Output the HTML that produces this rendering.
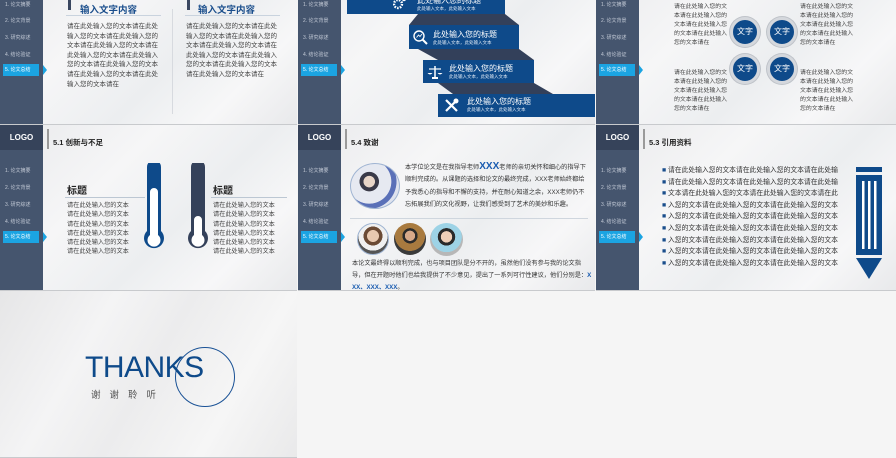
<!DOCTYPE html>
<html><head><meta charset="utf-8">
<style>
*{margin:0;padding:0;box-sizing:border-box}
body{width:896px;height:458px;background:#f5f5f5;position:relative;overflow:hidden;font-family:"Liberation Sans","Noto Sans CJK SC",sans-serif}
.s{position:absolute;overflow:hidden;background:linear-gradient(135deg,#e9eaec 0%,#f6f6f7 35%,#eceef0 60%,#f7f7f8 80%,#e8e9eb 100%);border-bottom:1px solid #c8cacd}
.side{position:absolute;left:0;top:0;width:43px;height:166px;background:#45556e}
.logo{position:absolute;left:0;top:0;width:43px;height:25px;background:#36435a;color:#fff;font-weight:bold;font-size:8px;text-align:center;line-height:25px}
.it{position:absolute;left:0;width:43px;height:12px;font-size:5px;color:#c3cad6;line-height:12px;padding-left:5px;white-space:nowrap}
.act{left:3px;width:36px;background:#1ba4e2;color:#fff;padding-left:2px}
.arr{position:absolute;left:43px;width:0;height:0;border-top:5px solid transparent;border-bottom:5px solid transparent;border-left:4px solid #1ba4e2}
.ab{position:absolute}
.ttl{position:absolute;left:47px;top:4px;width:2px;height:20px;background:#9a9a9a}
.tt{position:absolute;left:53px;top:12px;font-size:7.5px;font-weight:bold;color:#222}
.p{position:absolute;color:#444;word-break:break-all}
.bn{position:absolute;background:#0e4a8a;color:#fff}
.bn b{position:absolute;font-size:8px;font-weight:normal;white-space:nowrap}
.bn i{position:absolute;font-style:normal;font-size:4.5px;white-space:nowrap;color:#dbe6f2}
.c{position:absolute;width:30px;height:30px;border-radius:50%;background:#0e4a8a;border:3px solid #d5d8dd;box-shadow:0 0 0 1px #bfc3c9;color:#fff;font-size:8px;text-align:center;line-height:24px}
</style></head><body>

<div class="s" style="left:0;top:-41px;width:297px;height:166px">
 <div class="side"></div><div class="logo">LOGO</div>
 <div class="it" style="top:40px">1. 论文摘要</div><div class="it" style="top:56px">2. 论文背景</div><div class="it" style="top:73px">3. 研究综述</div><div class="it" style="top:90px">4. 结论验证</div><div class="it act" style="top:105px">5. 论文总结</div><div class="arr" style="top:106px"></div>
 <div class="ab" style="left:68px;top:38px;width:10px;height:13px;border-left:3px solid #3a4760;border-top:3px solid #3a4760"></div>
 <div class="ab" style="left:80px;top:43px;font-size:9.5px;font-weight:bold;color:#1a4e8c">输入文字内容</div>
 <div class="ab" style="left:66px;top:56px;width:95px;height:1px;background:#c9d3de"></div>
 <div class="ab" style="left:187px;top:38px;width:10px;height:13px;border-left:3px solid #3a4760;border-top:3px solid #3a4760"></div>
 <div class="ab" style="left:198px;top:43px;font-size:9.5px;font-weight:bold;color:#1a4e8c">输入文字内容</div>
 <div class="ab" style="left:185px;top:56px;width:95px;height:1px;background:#c9d3de"></div>
 <div class="ab" style="left:172px;top:50px;width:1px;height:105px;background:#d7dadf"></div>
 <div class="p" style="left:67px;top:63px;width:92px;font-size:6.5px;line-height:9.6px">请在此处输入您的文本请在此处输入您的文本请在此处输入您的文本请在此处输入您的文本请在此处输入您的文本请在此处输入您的文本请在此处输入您的文本请在此处输入您的文本请在此处输入您的文本请在</div>
 <div class="p" style="left:186px;top:63px;width:92px;font-size:6.5px;line-height:9.6px">请在此处输入您的文本请在此处输入您的文本请在此处输入您的文本请在此处输入您的文本请在此处输入您的文本请在此处输入您的文本请在此处输入您的文本请在此处输入您的文本请在</div>
</div>

<div class="s" style="left:298px;top:-41px;width:297px;height:166px">
 <div class="side"></div><div class="logo">LOGO</div>
 <div class="it" style="top:40px">1. 论文摘要</div><div class="it" style="top:56px">2. 论文背景</div><div class="it" style="top:73px">3. 研究综述</div><div class="it" style="top:90px">4. 结论验证</div><div class="it act" style="top:105px">5. 论文总结</div><div class="arr" style="top:106px"></div>
 <svg class="ab" style="left:0;top:0" width="297" height="166"><g fill="#33405a">
  <polygon points="120,55 207,55 221,66 111,66"/>
  <polygon points="120,90 221,90 236,101 140,101"/>
  <polygon points="140,124 236,124 255,135 155,135"/></g></svg>
 <div class="bn" style="left:49px;top:31px;width:158px;height:24px"><svg class="ab" style="left:46px;top:6px" width="14" height="14"><circle cx="5" cy="8" r="4" fill="none" stroke="#fff" stroke-width="2.4" stroke-dasharray="1.6 1.2"/><circle cx="11" cy="3" r="2.2" fill="#fff"/></svg><b style="left:70px;top:5px">此处输入您的标题</b><i style="left:70px;top:16px">此处输入文本，此处输入文本</i></div>
 <div class="bn" style="left:111px;top:66px;width:110px;height:24px"><svg class="ab" style="left:3px;top:4px" width="16" height="16"><circle cx="7" cy="7" r="5" fill="none" stroke="#fff" stroke-width="1.4"/><line x1="10.5" y1="10.5" x2="15" y2="15" stroke="#fff" stroke-width="2"/><path d="M4.5 8.5 L6.5 6 L8 7.5 L10 5" stroke="#fff" fill="none" stroke-width="0.9"/></svg><b style="left:24px;top:4px">此处输入您的标题</b><i style="left:24px;top:15px">此处输入文本，此处输入文本</i></div>
 <div class="bn" style="left:125px;top:101px;width:111px;height:23px"><svg class="ab" style="left:4px;top:4px" width="16" height="16"><line x1="8" y1="2" x2="8" y2="13" stroke="#fff" stroke-width="1.5"/><line x1="2" y1="5" x2="14" y2="5" stroke="#fff" stroke-width="1.2"/><path d="M0.5 9 Q3 12 5.5 9Z M10.5 9 Q13 12 15.5 9Z" fill="#fff"/><rect x="5" y="13" width="6" height="2" fill="#fff"/></svg><b style="left:26px;top:3px">此处输入您的标题</b><i style="left:26px;top:14px">此处输入文本，此处输入文本</i></div>
 <div class="bn" style="left:140px;top:135px;width:158px;height:23px"><svg class="ab" style="left:6px;top:4px" width="15" height="15"><path d="M2 13 L13 2 M2 2 L13 13" stroke="#fff" stroke-width="2.2"/><circle cx="12" cy="3" r="2.5" fill="#fff"/></svg><b style="left:29px;top:2px">此处输入您的标题</b><i style="left:29px;top:13px">此处输入文本，此处输入文本</i></div>
</div>

<div class="s" style="left:596px;top:-41px;width:300px;height:166px">
 <div class="side"></div><div class="logo">LOGO</div>
 <div class="it" style="top:40px">1. 论文摘要</div><div class="it" style="top:56px">2. 论文背景</div><div class="it" style="top:73px">3. 研究综述</div><div class="it" style="top:90px">4. 结论验证</div><div class="it act" style="top:105px">5. 论文总结</div><div class="arr" style="top:106px"></div>
 <div class="c" style="left:134px;top:58px">文字</div><div class="c" style="left:171px;top:58px">文字</div>
 <div class="c" style="left:134px;top:95px">文字</div><div class="c" style="left:171px;top:95px">文字</div>
 <div class="p" style="left:78px;top:44px;width:54px;font-size:5.9px;line-height:9.1px">请在此处输入您的文本请在此处输入您的文本请在此处输入您的文本请在此处输入您的文本请在</div>
 <div class="p" style="left:204px;top:44px;width:54px;font-size:5.9px;line-height:9.1px">请在此处输入您的文本请在此处输入您的文本请在此处输入您的文本请在此处输入您的文本请在</div>
 <div class="p" style="left:78px;top:110px;width:54px;font-size:5.9px;line-height:9.1px">请在此处输入您的文本请在此处输入您的文本请在此处输入您的文本请在此处输入您的文本请在</div>
 <div class="p" style="left:204px;top:110px;width:54px;font-size:5.9px;line-height:9.1px">请在此处输入您的文本请在此处输入您的文本请在此处输入您的文本请在此处输入您的文本请在</div>
</div>

<div class="s" style="left:0;top:125px;width:297px;height:166px">
 <div class="side"></div><div class="logo">LOGO</div>
 <div class="it" style="top:40px">1. 论文摘要</div><div class="it" style="top:57px">2. 论文背景</div><div class="it" style="top:74px">3. 研究综述</div><div class="it" style="top:91px">4. 结论验证</div><div class="it act" style="top:106px">5. 论文总结</div><div class="arr" style="top:107px"></div>
 <div class="ttl"></div><div class="tt">5.1 创新与不足</div>
 <svg class="ab" style="left:140px;top:38px" width="75" height="95">
  <path d="M7 4 a7 7 0 0 1 14 0 V68 a10 10 0 1 1 -14 0Z" fill="#0e4a8a"/>
  <path d="M10 29 a4 4 0 0 1 8 0 V72 a6.5 6.5 0 1 1 -8 0Z" fill="#fff"/>
  <path d="M51 4 a7 7 0 0 1 14 0 V68 a10 10 0 1 1 -14 0Z" fill="#34415a"/>
  <path d="M54 57 a4 4 0 0 1 8 0 V72 a6.5 6.5 0 1 1 -8 0Z" fill="#fff"/>
 </svg>
 <div class="ab" style="left:67px;top:57px;font-size:10px;font-weight:bold;color:#222">标题</div>
 <div class="ab" style="left:65px;top:72px;width:80px;height:1px;background:#bcc7d3"></div>
 <div class="ab" style="left:213px;top:57px;font-size:10px;font-weight:bold;color:#222">标题</div>
 <div class="ab" style="left:211px;top:72px;width:76px;height:1px;background:#bcc7d3"></div>
 <div class="p" style="left:67px;top:76px;width:66px;font-size:6.2px;line-height:9.3px">请在此处输入您的文本请在此处输入您的文本请在此处输入您的文本请在此处输入您的文本请在此处输入您的文本请在此处输入您的文本</div>
 <div class="p" style="left:213px;top:76px;width:66px;font-size:6.2px;line-height:9.3px">请在此处输入您的文本请在此处输入您的文本请在此处输入您的文本请在此处输入您的文本请在此处输入您的文本请在此处输入您的文本</div>
</div>

<div class="s" style="left:298px;top:125px;width:297px;height:166px">
 <div class="side"></div><div class="logo">LOGO</div>
 <div class="it" style="top:40px">1. 论文摘要</div><div class="it" style="top:57px">2. 论文背景</div><div class="it" style="top:74px">3. 研究综述</div><div class="it" style="top:91px">4. 结论验证</div><div class="it act" style="top:106px">5. 论文总结</div><div class="arr" style="top:107px"></div>
 <div class="ttl"></div><div class="tt">5.4 致谢</div>
 <div class="ab" style="left:52px;top:38px;width:50px;height:46px;border-radius:50%;background:radial-gradient(circle at 38% 40%,#e9d6c8 0 14%,#3a3a48 15% 24%,#e6e9f1 25% 55%,#5a70b8 56% 68%,#dfe3ee 69%);border:1px solid #9fb4d2"></div>
 <div class="p" style="left:107px;top:37px;width:185px;font-size:6.2px;line-height:12.4px;color:#333">本学位论文是在我指导老师<span style="color:#1a5cb0;font-weight:bold;font-size:10px;line-height:6px">XXX</span>老师的亲切关怀和细心的指导下顺利完成的。从课题的选择和论文的最终完成，XXX老师始终都给予我悉心的指导和不懈的支持，并在耐心知道之余，XXX老师仍不忘拓展我们的文化视野，让我们感受到了艺术的美妙和乐趣。</div>
 <div class="ab" style="left:52px;top:93px;width:238px;height:1px;background:#cfd6de"></div>
 <div class="ab" style="left:59px;top:98px;width:32px;height:32px;border-radius:50%;background:radial-gradient(circle at 50% 40%,#e8c9b0 0 25%,#6b4a34 26% 40%,#f0f0f0 41% 62%,#555 63%);border:1px solid #9fb4d2"></div>
 <div class="ab" style="left:96px;top:98px;width:32px;height:32px;border-radius:50%;background:radial-gradient(circle at 50% 40%,#d7a98a 0 20%,#2b2b2b 21% 30%,#a87a3f 31% 60%,#3a3a3a 61%)"></div>
 <div class="ab" style="left:132px;top:98px;width:33px;height:33px;border-radius:50%;background:radial-gradient(circle at 50% 42%,#efcfb8 0 22%,#2a2a2a 23% 34%,#9dd3e6 35% 60%,#b7b7b7 61%)"></div>
 <div class="p" style="left:54px;top:133px;width:240px;font-size:6.2px;line-height:12.2px;color:#333">本论文最终得以顺利完成，也与项目团队是分不开的，虽然他们没有参与我的论文指导，但在开题时他们也给我提供了不少意见，提出了一系列可行性建议，他们分别是：<span style="color:#1a5cb0;font-weight:bold">XXX、XXX、XXX</span>。</div>
</div>

<div class="s" style="left:596px;top:125px;width:300px;height:166px">
 <div class="side"></div><div class="logo">LOGO</div>
 <div class="it" style="top:40px">1. 论文摘要</div><div class="it" style="top:57px">2. 论文背景</div><div class="it" style="top:74px">3. 研究综述</div><div class="it" style="top:91px">4. 结论验证</div><div class="it act" style="top:106px">5. 论文总结</div><div class="arr" style="top:107px"></div>
 <div class="ttl"></div><div class="tt">5.3 引用资料</div>
 <div class="p" style="left:66px;top:40px;width:176px;font-size:6.8px;line-height:11.6px;color:#333;white-space:nowrap;overflow:hidden">
 <div><span style="color:#1a4e8c">■</span> 请在此处输入您的文本请在此处输入您的文本请在此处输入您</div>
 <div><span style="color:#1a4e8c">■</span> 请在此处输入您的文本请在此处输入您的文本请在此处输入您</div>
 <div><span style="color:#1a4e8c">■</span> 文本请在此处输入您的文本请在此处输入您的文本请在此处输</div>
 <div><span style="color:#1a4e8c">■</span> 入您的文本请在此处输入您的文本请在此处输入您的文本请在</div>
 <div><span style="color:#1a4e8c">■</span> 入您的文本请在此处输入您的文本请在此处输入您的文本请在</div>
 <div><span style="color:#1a4e8c">■</span> 入您的文本请在此处输入您的文本请在此处输入您的文本请在</div>
 <div><span style="color:#1a4e8c">■</span> 入您的文本请在此处输入您的文本请在此处输入您的文本请在</div>
 <div><span style="color:#1a4e8c">■</span> 入您的文本请在此处输入您的文本请在此处输入您的文本请在</div>
 <div><span style="color:#1a4e8c">■</span> 入您的文本请在此处输入您的文本请在此处输入您的文本请在</div>
 </div>
 <svg class="ab" style="left:258px;top:41px" width="32" height="114">
  <rect x="2" y="1" width="26" height="5" fill="#0e4a8a"/>
  <rect x="2" y="9" width="26" height="80" fill="#0e4a8a"/>
  <rect x="8" y="15" width="2.5" height="68" fill="#fff"/><rect x="14" y="15" width="2.5" height="68" fill="#fff"/><rect x="20" y="15" width="2.5" height="68" fill="#fff"/>
  <polygon points="2,92 28,92 15,113" fill="#0e4a8a"/>
 </svg>
</div>

<div class="s" style="left:0;top:291px;width:297px;height:167px;background:linear-gradient(120deg,#e6e6e7 0%,#f4f4f5 30%,#ececed 50%,#f6f6f6 75%,#e9e9ea 100%)">
 <div class="ab" style="left:175px;top:56px;width:60px;height:60px;border-radius:50%;border:1px solid #1a5296"></div>
 <div class="ab" style="left:85px;top:60px;font-size:30px;color:#0e4a8a;letter-spacing:-0.5px">THANKS</div>
 <div class="ab" style="left:91px;top:96px;font-size:9.5px;color:#555;letter-spacing:9px">谢谢聆听</div>
</div>
</body></html>
